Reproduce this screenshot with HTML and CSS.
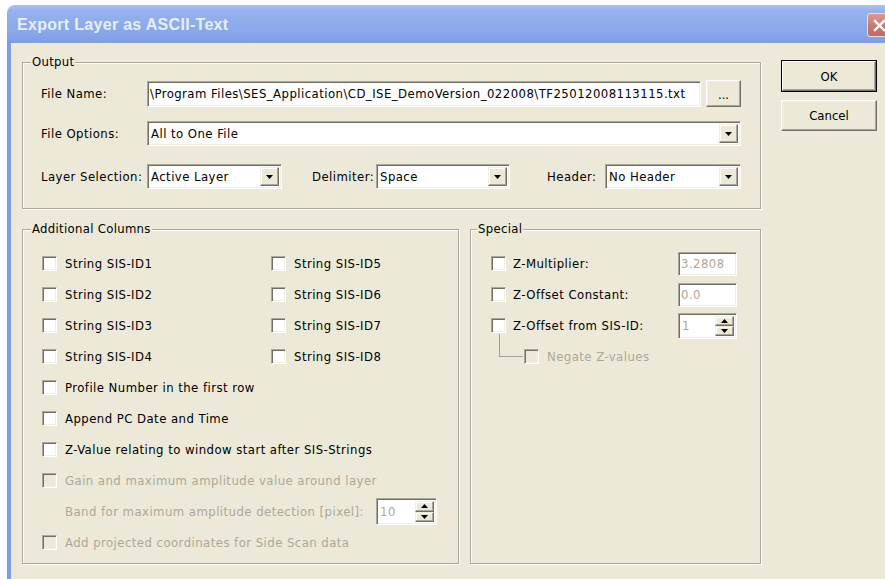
FILE: index.html
```html
<!DOCTYPE html>
<html>
<head>
<meta charset="utf-8">
<title>Export Layer as ASCII-Text</title>
<link rel="stylesheet" href="styles.css">
</head>
<body>
<div class="window">
  <div class="titlebar">
    <span class="title">Export Layer as ASCII-Text</span>
    <span class="close">
      <svg width="13" height="13" viewBox="0 0 13 13"><path d="M2 2L11 11M11 2L2 11" stroke="#fff" stroke-width="2.4" stroke-linecap="square"/></svg>
    </span>
  </div>

  <div class="client">
    <div class="main">
      <fieldset class="group output">
        <legend>Output</legend>
        <div class="group-body">
          <div class="row r-file">
            <span class="lbl">File Name:</span>
            <div class="field sunken file-name">\Program Files\SES_Application\CD_ISE_DemoVersion_022008\TF25012008113115.txt</div>
            <button class="btn browse">...</button>
          </div>
          <div class="row r-opts">
            <span class="lbl">File Options:</span>
            <div class="combo sunken grow">
              <span class="combo-text">All to One File</span>
              <span class="drop"><svg width="7" height="4" viewBox="0 0 7 4"><path d="M0 0H7L3.5 4Z" fill="#000"/></svg></span>
            </div>
          </div>
          <div class="row r-layer">
            <span class="lbl">Layer Selection:</span>
            <div class="combo sunken c-layer">
              <span class="combo-text">Active Layer</span>
              <span class="drop"><svg width="7" height="4" viewBox="0 0 7 4"><path d="M0 0H7L3.5 4Z" fill="#000"/></svg></span>
            </div>
            <span class="lbl-delim">Delimiter:</span>
            <div class="combo sunken c-delim">
              <span class="combo-text">Space</span>
              <span class="drop"><svg width="7" height="4" viewBox="0 0 7 4"><path d="M0 0H7L3.5 4Z" fill="#000"/></svg></span>
            </div>
            <span class="lbl-head">Header:</span>
            <div class="combo sunken grow">
              <span class="combo-text">No Header</span>
              <span class="drop"><svg width="7" height="4" viewBox="0 0 7 4"><path d="M0 0H7L3.5 4Z" fill="#000"/></svg></span>
            </div>
          </div>
        </div>
      </fieldset>

      <div class="groups">
        <fieldset class="group columns">
          <legend>Additional Columns</legend>
          <div class="group-body cols-grid">
            <div class="check"><span class="box"></span>String SIS-ID1</div>
            <div class="check"><span class="box"></span>String SIS-ID5</div>
            <div class="check"><span class="box"></span>String SIS-ID2</div>
            <div class="check"><span class="box"></span>String SIS-ID6</div>
            <div class="check"><span class="box"></span>String SIS-ID3</div>
            <div class="check"><span class="box"></span>String SIS-ID7</div>
            <div class="check"><span class="box"></span>String SIS-ID4</div>
            <div class="check"><span class="box"></span>String SIS-ID8</div>
            <div class="check wide"><span class="box"></span>Profile Number in the first row</div>
            <div class="check wide"><span class="box"></span>Append PC Date and Time</div>
            <div class="check wide"><span class="box"></span>Z-Value relating to window start after SIS-Strings</div>
            <div class="check wide disabled"><span class="box"></span>Gain and maximum amplitude value around layer</div>
            <div class="check wide band disabled">
              <span class="band-lbl">Band for maximum amplitude detection [pixel]:</span>
              <div class="spin sunken s-band">
                <span class="spin-text">10</span>
                <span class="spin-btns">
                  <span class="spin-up"><svg width="7" height="4" viewBox="0 0 7 4"><path d="M0 4H7L3.5 0Z" fill="#000"/></svg></span>
                  <span class="spin-down"><svg width="7" height="4" viewBox="0 0 7 4"><path d="M0 0H7L3.5 4Z" fill="#000"/></svg></span>
                </span>
              </div>
            </div>
            <div class="check wide disabled"><span class="box"></span>Add projected coordinates for Side Scan data</div>
          </div>
        </fieldset>

        <fieldset class="group special">
          <legend>Special</legend>
          <div class="group-body">
            <div class="srow">
              <span class="box"></span>
              <span class="slbl">Z-Multiplier:</span>
              <div class="field sunken num">3.2808</div>
            </div>
            <div class="srow">
              <span class="box"></span>
              <span class="slbl">Z-Offset Constant:</span>
              <div class="field sunken num">0.0</div>
            </div>
            <div class="srow">
              <span class="box"></span>
              <span class="slbl">Z-Offset from SIS-ID:</span>
              <div class="spin sunken s-id">
                <span class="spin-text">1</span>
                <span class="spin-btns">
                  <span class="spin-up"><svg width="7" height="4" viewBox="0 0 7 4"><path d="M0 4H7L3.5 0Z" fill="#000"/></svg></span>
                  <span class="spin-down"><svg width="7" height="4" viewBox="0 0 7 4"><path d="M0 0H7L3.5 4Z" fill="#000"/></svg></span>
                </span>
              </div>
            </div>
            <div class="srow disabled">
              <span class="tree"></span>
              <span class="box"></span>
              <span>Negate Z-values</span>
            </div>
          </div>
        </fieldset>
      </div>
    </div>

    <div class="buttons">
      <button class="btn default"><span class="btn-face">OK</span></button>
      <button class="btn cancel">Cancel</button>
    </div>
  </div>
</div>
</body>
</html>
```

FILE: styles.css
```css
* {
  box-sizing: border-box;
}

body {
  margin: 0;
  padding: 5px 0 0 7px;
  height: 579px;
  overflow: hidden;
  background: #fff;
  font: 13px "DejaVu Sans Condensed", "DejaVu Sans", sans-serif;
  letter-spacing: 0.45px;
  color: #000;
}

/* window frame */
.window {
  width: 891px;
  height: 600px;
  display: flex;
  flex-direction: column;
  border-radius: 8px 8px 0 0;
  overflow: hidden;
}

.titlebar {
  height: 38px;
  flex: none;
  display: flex;
  align-items: center;
  padding-left: 10px;
  background: linear-gradient(#adc4f1, #95b2ec 14%, #8aa8e9 70%, #7f9ce3);
  color: #e6eefb;
}

.title {
  font: bold 16px "Liberation Sans", sans-serif;
  letter-spacing: 0.3px;
  margin-top: 1px;
}

.close {
  margin-left: auto;
  margin-right: 6px;
  margin-top: 2px;
  width: 25px;
  height: 24px;
  border: 1px solid #efdcdc;
  border-radius: 3px;
  background: linear-gradient(#d89a92, #c77770 60%, #bd6c66);
  display: flex;
  align-items: center;
  justify-content: center;
}

.client {
  flex: 1;
  display: flex;
  align-items: flex-start;
  background: #ece9d8;
  border-left: 4px solid #7f9de6;
  border-right: 4px solid #7f9de6;
  padding: 11px 0 0 11px;
}

.main {
  width: 739px;
  flex: none;
}

/* group boxes */
.group {
  margin: 0;
  padding: 0;
  min-width: 0;
  border: 1px solid #aca899;
  box-shadow: inset 1px 1px #fff, 1px 1px #fff;
}

.group legend {
  margin-left: 8px;
  padding: 0 1px;
  height: 16px;
  line-height: 16px;
  background: #ece9d8;
  letter-spacing: 0.3px;
}

.special legend {
  margin-left: 6px;
}

.output .group-body {
  padding: 10px 19px 19px 18px;
}

.row {
  display: flex;
  align-items: center;
}

.r-file { height: 27px; }
.r-opts { height: 25px; margin-top: 14px; }
.r-layer { height: 25px; margin-top: 18px; }

.lbl {
  width: 106px;
  flex: none;
}

.lbl-delim {
  width: 64px;
  margin-left: 30px;
  flex: none;
}

.lbl-head {
  width: 58px;
  margin-left: 37px;
  flex: none;
}

/* sunken edit / combo frame */
.sunken {
  border: 1px solid;
  border-color: #aca899 #fff #fff #aca899;
  box-shadow: inset 1px 1px #716f64, inset -1px -1px #f1efe2;
  background: #fff;
}

.field {
  height: 100%;
  padding: 0 0 0 3px;
  display: flex;
  align-items: center;
  white-space: nowrap;
  overflow: hidden;
}

.file-name {
  height: 26px;
  flex: 1;
  padding-left: 2px;
}

.btn {
  font: inherit;
  color: #000;
  background: #ece9d8;
  border: 1px solid;
  border-color: #fff #716f64 #716f64 #fff;
  box-shadow: inset -1px -1px #aca899, inset 1px 1px #f1efe2;
  padding: 0;
  margin: 0;
  cursor: default;
}

.browse {
  width: 35px;
  height: 27px;
  margin-left: 5px;
  flex: none;
  padding-top: 2px;
}

.combo {
  height: 25px;
  display: flex;
  align-items: stretch;
  padding: 2px;
}

.grow { flex: 1; }
.c-layer { width: 135px; flex: none; }
.c-delim { width: 134px; flex: none; }

.combo-text {
  flex: 1;
  display: flex;
  align-items: center;
  padding-left: 1px;
  white-space: nowrap;
  overflow: hidden;
}

.drop {
  width: 19px;
  flex: none;
  display: flex;
  align-items: center;
  justify-content: center;
  background: #ece9d8;
  border: 1px solid;
  border-color: #f1efe2 #716f64 #716f64 #f1efe2;
  box-shadow: inset -1px -1px #aca899, inset 1px 1px #fff;
}

.groups {
  display: flex;
  gap: 11px;
  margin-top: 12px;
}

.columns { width: 437px; flex: none; }
.special { width: 291px; flex: none; }

.cols-grid {
  display: grid;
  grid-template-columns: 229px 1fr;
  grid-auto-rows: 31px;
  padding: 11px 0 5px 19px;
}

.check {
  display: flex;
  align-items: center;
  white-space: nowrap;
}

.wide { grid-column: 1 / -1; }

.box {
  width: 15px;
  height: 15px;
  flex: none;
  margin-right: 8px;
  background: #fff;
  border: 1px solid;
  border-color: #aca899 #fff #fff #aca899;
  box-shadow: inset 1px 1px #716f64, inset -1px -1px #f1efe2;
}

.disabled { color: #aca899; }
.disabled .box { background: #ece9d8; }

.band { padding-left: 23px; }

.band-lbl {
  width: 311px;
  flex: none;
}

/* spin boxes */
.spin {
  display: flex;
  align-items: stretch;
  padding: 2px;
}

.s-band { width: 61px; height: 27px; }
.s-id { width: 59px; height: 26px; }

.spin-text {
  flex: 1;
  display: flex;
  align-items: center;
  padding-left: 1px;
  color: #aca899;
}

.spin-btns {
  width: 19px;
  flex: none;
  display: flex;
  flex-direction: column;
}

.spin-up,
.spin-down {
  flex: 1;
  display: flex;
  align-items: center;
  justify-content: center;
  background: #ece9d8;
  border: 1px solid;
  border-color: #f1efe2 #716f64 #716f64 #f1efe2;
  box-shadow: inset -1px -1px #aca899, inset 1px 1px #fff;
}

/* special group */
.special .group-body {
  padding: 11px 0 5px 20px;
}

.srow {
  height: 31px;
  display: flex;
  align-items: center;
  white-space: nowrap;
}

.srow .box { margin-right: 7px; }

.slbl {
  width: 165px;
  flex: none;
}

.num {
  width: 59px;
  height: 24px;
  flex: none;
  color: #aca899;
  padding-left: 2px;
}

.tree {
  align-self: flex-start;
  flex: none;
  width: 24px;
  height: 23px;
  margin: -7px 1px 0 8px;
  border-left: 1px solid #a0a0a0;
  border-bottom: 1px solid #a0a0a0;
}

.srow.disabled .box { margin-right: 8px; }

/* dialog buttons */
.buttons {
  width: 96px;
  flex: none;
  margin-left: 20px;
  margin-top: 6px;
  display: flex;
  flex-direction: column;
  gap: 8px;
}

.default {
  height: 32px;
  border: 1px solid #000;
  box-shadow: none;
  padding: 0;
}

.btn-face {
  display: flex;
  align-items: center;
  justify-content: center;
  height: 100%;
  border: 1px solid;
  border-color: #fff #716f64 #716f64 #fff;
  box-shadow: inset -1px -1px #aca899;
}

.cancel {
  height: 31px;
}
```
